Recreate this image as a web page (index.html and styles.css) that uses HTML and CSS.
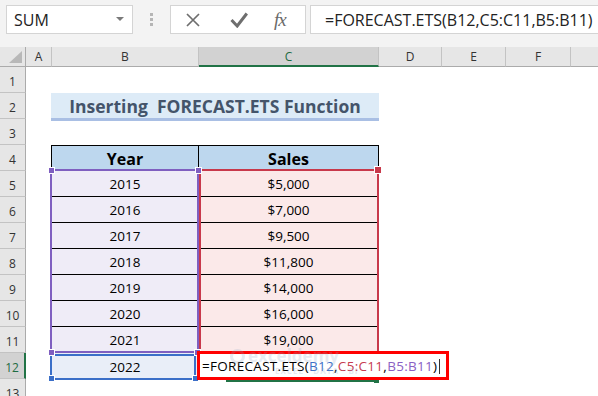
FILE: index.html
```html
<!DOCTYPE html>
<html>
<head>
<meta charset="utf-8">
<link rel="stylesheet" href="styles.css">
</head>
<body>
<div class="toolbar">
  <div class="namebox"><span class="nb-text">SUM</span><span class="nb-arrow"></span></div>
  <div class="grip"><i></i><i></i><i></i></div>
  <div class="fxbox">
    <svg class="ico-x" width="14" height="14" viewBox="0 0 14 14"><path d="M1 1L13 13M13 1L1 13" stroke="#6e6e6e" stroke-width="1.7" fill="none"/></svg>
    <svg class="ico-ok" width="18" height="16" viewBox="0 0 18 16"><path d="M1.5 8L7.2 14L16.8 1.5" stroke="#6e6e6e" stroke-width="3" fill="none"/></svg>
    <span class="fx">fx</span>
  </div>
  <div class="formula">=FORECAST.ETS(B12,C5:C11,B5:B11)</div>
</div>
<div class="colheads">
  <div class="corner"><svg width="13" height="12" viewBox="0 0 13 12"><path d="M13 0V12H0Z" fill="#b8b8b8"/></svg></div>
  <div class="ch col-a">A</div>
  <div class="ch col-b">B</div>
  <div class="ch col-c active">C</div>
  <div class="ch col-d">D</div>
  <div class="ch col-e">E</div>
  <div class="ch col-f">F</div>
  <div class="ch col-g">G</div>
</div>
<div class="sheet">
  <div class="rowheads">
    <div class="rh">1</div>
    <div class="rh">2</div>
    <div class="rh">3</div>
    <div class="rh">4</div>
    <div class="rh">5</div>
    <div class="rh">6</div>
    <div class="rh">7</div>
    <div class="rh">8</div>
    <div class="rh">9</div>
    <div class="rh">10</div>
    <div class="rh">11</div>
    <div class="rh active">12</div>
    <div class="rh">13</div>
  </div>
  <div class="cells">
    <div class="row"></div>
    <div class="row"><div class="title">Inserting  FORECAST.ETS Function</div></div>
    <div class="row"></div>
    <div class="row"><div class="cell b th">Year</div><div class="cell c th">Sales</div></div>
    <div class="row"><div class="cell b td">2015</div><div class="cell c td">$5,000</div></div>
    <div class="row"><div class="cell b td">2016</div><div class="cell c td">$7,000</div></div>
    <div class="row"><div class="cell b td">2017</div><div class="cell c td">$9,500</div></div>
    <div class="row"><div class="cell b td">2018</div><div class="cell c td">$11,800</div></div>
    <div class="row"><div class="cell b td">2019</div><div class="cell c td">$14,000</div></div>
    <div class="row"><div class="cell b td">2020</div><div class="cell c td">$16,000</div></div>
    <div class="row"><div class="cell b td">2021</div><div class="cell c td">$19,000</div></div>
    <div class="row"><div class="cell b sel">2022</div><div class="cell c"></div></div>
    <div class="row"></div>

    <div class="range range-red"></div>
    <div class="range range-purple"></div>
    <div class="range range-blue"></div>
    <div class="handle h-purple h-p1"></div>
    <div class="handle h-purple h-p2"></div>
    <div class="handle h-purple h-p3"></div>
    <div class="handle h-purple h-p4"></div>
    <div class="handle h-red h-r1"></div>
    <div class="handle h-blue h-b1"></div>
    <div class="handle h-blue h-b2"></div>
    <div class="active-line"></div>
    <div class="active-handle"></div>
    <div class="edit">=FORECAST.ETS(<span class="ref-blue">B12</span>,<span class="ref-red">C5:C11</span>,<span class="ref-purple">B5:B11</span>)<span class="caret"></span></div>
    <div class="watermark">
      <div class="wm-main"><span class="wm-logo"></span>exceldemy</div>
      <div class="wm-sub">EXCEL · DATA · BI</div>
    </div>
  </div>
</div>
</body>
</html>
```

FILE: styles.css
```css
* { box-sizing: border-box; }
html, body { margin: 0; padding: 0; }
body {
  width: 598px;
  height: 396px;
  overflow: hidden;
  background: #ffffff;
  font-family: "Open Sans", "Noto Sans", sans-serif;
  color: #000;
}

/* ---------- toolbar ---------- */
.toolbar {
  height: 47px;
  background: #f3f3f3;
  display: flex;
  align-items: flex-start;
  padding: 5px 0 0 6px;
}
.namebox {
  width: 127px;
  height: 29px;
  background: #fff;
  border: 1px solid #d4d4d4;
  display: flex;
  align-items: center;
  padding: 1px 8px 0 7px;
}
.nb-text { font-size: 16px; color: #222; line-height: 20px; }
.nb-arrow {
  margin-left: auto;
  width: 0; height: 0;
  border-left: 4px solid transparent;
  border-right: 4px solid transparent;
  border-top: 4px solid #7a7a7a;
  margin-top: -2px;
}
.grip {
  width: 37px;
  display: flex;
  flex-direction: column;
  align-items: center;
  gap: 2px;
  padding-top: 8px;
}
.grip i { display: block; width: 3px; height: 3px; background: #b5b5b5; }
.fxbox {
  width: 136px;
  height: 29px;
  background: #fff;
  border: 1px solid #d4d4d4;
  display: flex;
  align-items: center;
  padding-left: 15px;
}
.ico-x { margin-top: 1px; }
.ico-ok { margin-left: 30px; margin-top: 0px; }
.fx {
  margin-left: 26px;
  font-family: "Liberation Serif", "DejaVu Serif", serif;
  font-style: italic;
  font-size: 19px;
  color: #6a6a6a;
  line-height: 20px;
  letter-spacing: -1px;
}
.formula {
  flex: 1;
  margin-left: 4px;
  margin-right: -3px;
  height: 29px;
  background: #fff;
  border: 1px solid #d4d4d4;
  display: flex;
  align-items: center;
  padding: 1px 0 0 14px;
  font-size: 16px;
  color: #222;
  white-space: nowrap;
}

/* ---------- column headers ---------- */
.colheads {
  height: 20px;
  display: flex;
  background: #e6e6e6;
}
.corner {
  width: 26px;
  flex: none;
  border-right: 1px solid #ababab;
  border-bottom: 1px solid #ababab;
  display: flex;
  align-items: flex-end;
  justify-content: flex-end;
  padding: 0 3px 3px 0;
}
.ch {
  flex: none;
  height: 20px;
  border-right: 1px solid #c3c3c3;
  border-bottom: 1px solid #ababab;
  display: flex;
  align-items: center;
  justify-content: center;
  font-size: 12px;
  color: #333;
  padding-bottom: 1px;
}
.col-a { width: 26px; }
.col-b { width: 147px; }
.col-c { width: 180px; }
.col-d { width: 63px; }
.col-e { width: 64px; }
.col-f { width: 65px; }
.col-g { width: 64px; }
.ch.active {
  background: #d2d2d2;
  border-bottom: 2px solid #217346;
  color: #1e6b42;
  padding-bottom: 0;
}

/* ---------- sheet ---------- */
.sheet { display: flex; }
.rowheads {
  width: 26px;
  flex: none;
  background: #e6e6e6;
}
.rh {
  height: 26px;
  border-right: 1px solid #ababab;
  border-bottom: 1px solid #c3c3c3;
  display: flex;
  align-items: flex-end;
  justify-content: center;
  font-size: 12px;
  line-height: 16px;
  color: #333;
  padding-bottom: 2px;
}
.rh.active {
  background: #d2d2d2;
  border-right: 2px solid #217346;
  color: #1e6b42;
}

.cells {
  flex: 1;
  position: relative;
  background: #fff;
}
.row {
  height: 26px;
  display: flex;
  padding-left: 25px;
}
.title {
  width: 328px;
  height: 28px;
  flex: none;
  background: #ddebf7;
  border-bottom: 3px solid #a9bfe4;
  color: #44546a;
  font-weight: 700;
  font-size: 17.5px;
  line-height: 24px;
  padding-top: 1px;
  text-align: center;
  white-space: pre;
}
.cell {
  height: 26px;
  flex: none;
  display: flex;
  align-items: center;
  justify-content: center;
  white-space: nowrap;
}
.cell.b { width: 148px; border-left: 1px solid #000; border-right: 1px solid #000; }
.cell.c { width: 180px; border-right: 1px solid #000; }
.th {
  background: #bdd7ee;
  border-top: 1px solid #000;
  border-bottom: 1px solid #000;
  font-weight: 700;
  font-size: 16px;
  padding-top: 1px;
}
.td {
  border-bottom: 1px solid #000;
  font-size: 13.5px;
  padding-top: 1px;
}
.cell.b.td { background: #efecf7; }
.cell.c.td { background: #fbe9e9; }
.cell.sel {
  background: #e9eef8;
  font-size: 13.5px;
  padding-top: 2px;
}
.row .cell.c:empty { border-right: none; }

/* ---------- overlays: reference highlights ---------- */
.range { position: absolute; border: 2px solid; }
.range-purple { left: 24px; top: 102px; width: 149px; height: 184px; border-color: #7f5fc0; }
.range-red { left: 173px; top: 102px; width: 180px; height: 184px; border-color: #c8394b; }
.range-blue { left: 24px; top: 287px; width: 146px; height: 26px; border-color: #3b6fc8; }

.handle { position: absolute; width: 5px; height: 5px; outline: 1px solid #fff; }
.h-purple { background: #7f5fc0; }
.h-red { background: #c8394b; width: 6px; height: 6px; }
.h-blue { background: #3b6fc8; }
.h-p1 { left: 23px; top: 101px; }
.h-p2 { left: 170px; top: 101px; }
.h-p3 { left: 23px; top: 283px; }
.h-p4 { left: 169px; top: 283px; }
.h-r1 { left: 349px; top: 100px; }
.h-b1 { left: 23px; top: 309px; }
.h-b2 { left: 167px; top: 309px; }

.active-line { position: absolute; left: 200px; top: 313px; width: 148px; height: 2px; background: #217346; }
.active-handle { position: absolute; left: 348px; top: 311px; width: 5px; height: 5px; background: #217346; }

.edit {
  position: absolute;
  left: 171px;
  top: 284px;
  width: 252px;
  height: 29px;
  border: 3px solid #ff0000;
  background: #fff;
  padding: 1px 0 0 2px;
  font-size: 13.5px;
  line-height: 22px;
  letter-spacing: 0.3px;
  white-space: nowrap;
  color: #000;
  display: flex;
  align-items: center;
}
.ref-blue { color: #3d70c6; }
.ref-red { color: #c63b4f; }
.ref-purple { color: #8a60c4; }
.caret { display: inline-block; width: 1px; height: 15px; background: #333; margin-left: 2px; }

.watermark {
  position: absolute;
  left: 204px;
  top: 279px;
  pointer-events: none;
  opacity: 0.22;
}
.wm-main {
  display: flex;
  align-items: center;
  gap: 3px;
  font-size: 17px;
  font-weight: 700;
  color: #8fa6c4;
  line-height: 20px;
}
.wm-logo {
  display: inline-block;
  width: 15px;
  height: 15px;
  border-radius: 50%;
  border: 3px solid #8fa6c4;
}
.wm-sub {
  margin-left: 45px;
  font-size: 8px;
  font-weight: 700;
  letter-spacing: 1px;
  color: #8fa6c4;
  line-height: 10px;
}
```
